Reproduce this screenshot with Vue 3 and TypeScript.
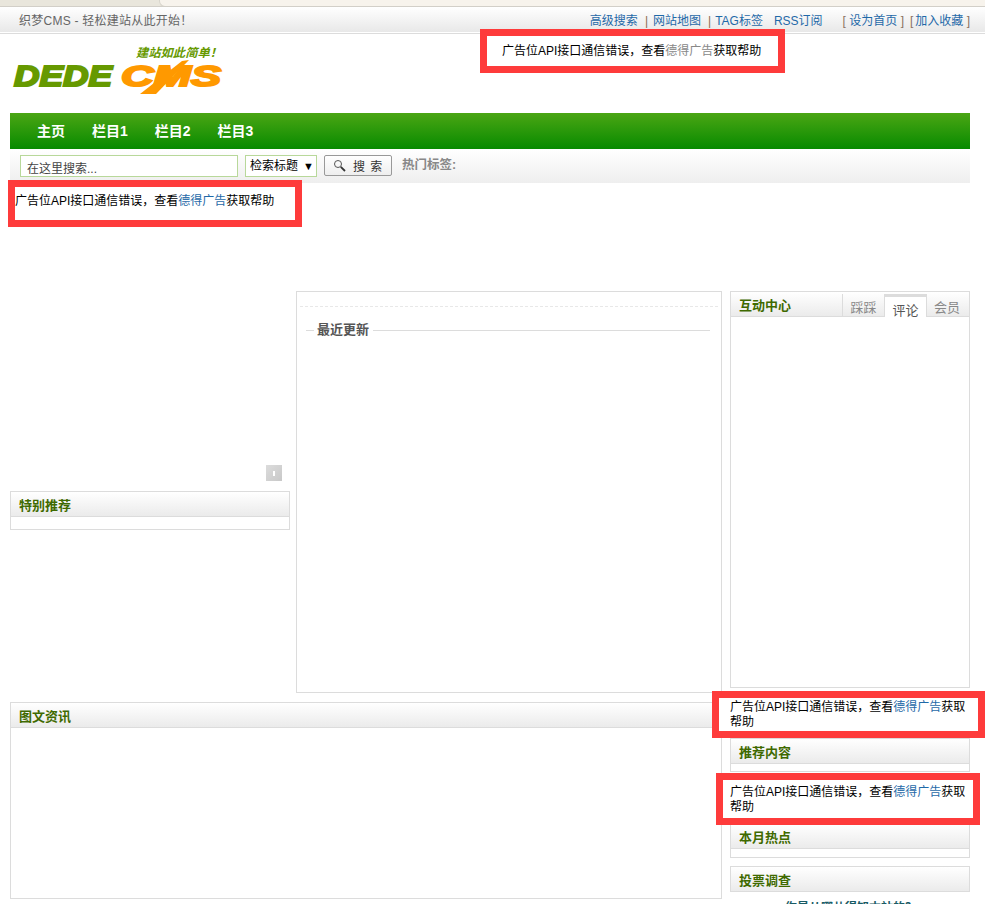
<script setup lang="ts">
const adText = { before: '广告位API接口通信错误，查看', link: '德得广告', after: '获取帮助' }
</script>

<template>
  <div class="page">
    <div class="chrome"><div class="chrome-tab"></div></div>
    <div class="topbar">
      <span class="welcome">织梦CMS - 轻松建站从此开始！</span>
      <nav class="toplinks">
        <a>高级搜索</a><i class="sep">|</i><a>网站地图</a><i class="sep sep-b">|</i><a>TAG标签</a>
        <a class="rss">RSS订阅</a>
        <span class="bracket first">[ <a>设为首页</a> ]</span>
        <span class="bracket">[<a class="inner">加入收藏</a> ]</span>
      </nav>
    </div>

    <div class="wrap">
      <header class="header">
        <svg class="logo" width="220" height="64" viewBox="0 0 220 64">
          <text x="126" y="16" class="slogan" textLength="86" lengthAdjust="spacingAndGlyphs">建站如此简单！</text>
          <text x="4" y="45" class="logo-dede" textLength="98" lengthAdjust="spacingAndGlyphs">DEDE</text>
          <text x="111" y="45" class="logo-cms" textLength="100" lengthAdjust="spacingAndGlyphs">CMS</text>
          <polygon points="130,53 172,20 179,19 146,53" fill="#ff9900" />
        </svg>
        <div class="ad ad-top">
          {{ adText.before }}<a class="muted">{{ adText.link }}</a>{{ adText.after }}
        </div>
      </header>

      <nav class="mainnav">
        <a>主页</a><a>栏目1</a><a>栏目2</a><a>栏目3</a>
      </nav>

      <div class="searchbar">
        <input class="search-input" type="text" value="在这里搜索..." />
        <div class="search-select">检索标题<span class="arrow">▼</span></div>
        <button class="search-btn" type="button">
          <svg width="13" height="13" viewBox="0 0 13 13" fill="none">
            <circle cx="5" cy="5" r="3.5" stroke="#555" stroke-width="1" />
            <path d="M7.8 7.8 L12 12" stroke="#333" stroke-width="1.8" />
          </svg>
          <span>搜 索</span>
        </button>
        <b class="hot">热门标签:</b>
      </div>

      <div class="ad ad-banner">
        {{ adText.before }}<a>{{ adText.link }}</a>{{ adText.after }}
      </div>

      <main class="columns">
        <div class="main-area">
          <div class="top-row">
            <div class="left-col">
              <div class="slider">
                <span class="slide-dot"><i></i></span>
              </div>
              <section class="panel panel-special">
                <h3 class="panel-head">特别推荐</h3>
              </section>
            </div>
            <section class="center">
              <div class="dashed"></div>
              <div class="recent"><b>最近更新</b></div>
            </section>
          </div>
          <section class="panel panel-image">
            <h3 class="panel-head">图文资讯</h3>
          </section>
        </div>

        <aside class="side">
          <section class="panel panel-interact">
            <div class="panel-head tab-head">
              <h3>互动中心</h3>
              <div class="tabs">
                <span>踩踩</span>
                <span class="active">评论</span>
                <span>会员</span>
              </div>
            </div>
          </section>
          <div class="ad ad-side-a">
            {{ adText.before }}<a>{{ adText.link }}</a>{{ adText.after }}
          </div>
          <section class="panel panel-rec">
            <h3 class="panel-head">推荐内容</h3>
          </section>
          <div class="ad ad-side-b">
            {{ adText.before }}<a>{{ adText.link }}</a>{{ adText.after }}
          </div>
          <section class="panel panel-hot">
            <h3 class="panel-head">本月热点</h3>
          </section>
          <section class="panel panel-vote">
            <h3 class="panel-head">投票调查</h3>
          </section>
          <p class="vote-q">你是从哪儿得知本站的？</p>
        </aside>
      </main>
    </div>
  </div>
</template>

<style>
html, body { margin: 0; overflow: hidden; background: #fff; }
</style>

<style scoped>
.page {
  height: 904px;
  overflow: hidden;
  font: 12px/15px "Liberation Sans", "Noto Sans CJK SC", sans-serif;
  color: #000;
  background: #fff;
}
a { color: #1f69a8; text-decoration: none; }
h3 { margin: 0; }

.chrome {
  height: 6px;
  background: #e9e6dc;
  border-bottom: 1px solid #d2cfc8;
  overflow: hidden;
}
.chrome-tab {
  margin-left: 159px;
  height: 12px;
  background: #f7f3ec;
  border-bottom-left-radius: 6px;
  border: 1px solid #d8d5cc;
  border-top: 0;
  border-right: 0;
  margin-top: -6px;
}

.topbar {
  height: 25px;
  box-sizing: border-box;
  display: flex;
  justify-content: space-between;
  align-items: center;
  padding: 4px 15px 0 19px;
  background: linear-gradient(#ffffff, #e8e8e8);
  box-shadow: 0 1px 0 #fff, 0 2px 0 #dcdcdc;
}
.welcome { color: #666; letter-spacing: .25px; font-size: 12px; }
.toplinks { display: flex; align-items: center; white-space: nowrap; }
.sep { font-style: normal; color: #8a6d4e; margin: 0 5px 0 7px; }
.sep-b { margin: 0 4px 0 7px; }
.rss { margin-left: 11px; }
.bracket { color: #8a7060; margin-left: 6px; }
.bracket.first { margin-left: 20px; }
.inner { margin-left: 2px; }

.wrap { margin: 0 15px 0 10px; padding-top: 1px; }

.header {
  height: 80px;
  display: flex;
  align-items: flex-start;
  position: relative;
}
.logo { margin-top: 8px; flex: none; overflow: visible; }
.slogan { font: italic 700 12px "Noto Sans CJK SC", sans-serif; fill: #669900; }
.logo-dede, .logo-cms {
  font: italic 700 29px "Liberation Sans", sans-serif;
  stroke-width: 2;
}
.logo-dede { fill: #669900; stroke: #669900; }
.logo-cms { fill: #ff9900; stroke: #ff9900; }

.ad { position: relative; outline: 7px solid #fe3b3b; background: #fff; }
.ad-top {
  margin: 3px 0 0 257px;
  width: 291px;
  height: 30px;
  box-sizing: border-box;
  padding: 8px 0 0 15px;
  white-space: nowrap;
}
.muted { color: #888; }

.mainnav {
  height: 36px;
  box-sizing: border-box;
  display: flex;
  align-items: center;
  padding: 1px 0 0 27px;
  gap: 27px;
  background: linear-gradient(#4ba614, #078a00);
}
.mainnav a { color: #fff; font-size: 14px; font-weight: 700; }

.searchbar {
  height: 34px;
  display: flex;
  align-items: flex-start;
  padding: 6px 0 0 10px;
  box-sizing: border-box;
  background: linear-gradient(#ffffff, #eeeeee);
}
.search-input {
  width: 218px;
  height: 22px;
  box-sizing: border-box;
  border: 1px solid #b8d89a;
  padding: 3px 6px 0;
  margin: 0;
  font: 12px "Liberation Sans", "Noto Sans CJK SC", sans-serif;
  color: #444;
  outline: none;
  background: #fff;
}
.search-select {
  margin-left: 7px;
  width: 72px;
  height: 22px;
  box-sizing: border-box;
  border: 1px solid #b8d89a;
  background: #fff;
  padding-left: 4px;
  display: flex;
  align-items: center;
  gap: 5px;
  font-size: 12px;
  white-space: nowrap;
}
.arrow { font-size: 11px; }
.search-btn {
  margin-left: 7px;
  width: 68px;
  height: 21px;
  box-sizing: border-box;
  border: 1px solid #999;
  border-radius: 2px;
  background: linear-gradient(#fff, #eee);
  padding: 0 0 0 8px;
  display: flex;
  align-items: center;
  gap: 7px;
  font: 12px "Liberation Sans", "Noto Sans CJK SC", sans-serif;
  color: #333;
}
.search-btn span { word-spacing: 2px; white-space: nowrap; }
.hot { margin-left: 10px; color: #888; font-size: 12.5px; line-height: 20px; white-space: nowrap; }

.ad-banner {
  margin: 4px 0 71px 5px;
  width: 280px;
  height: 33px;
  padding: 7px 0 0;
  box-sizing: border-box;
  white-space: nowrap;
}

.columns { display: flex; gap: 8px; align-items: flex-start; }
.main-area { width: 712px; flex: none; }
.top-row { display: flex; gap: 6px; align-items: flex-start; }
.left-col { width: 280px; flex: none; }
.slider {
  height: 200px;
  display: flex;
  align-items: flex-end;
  justify-content: flex-end;
  padding: 0 8px 10px 0;
  box-sizing: border-box;
}
.slide-dot {
  width: 16px;
  height: 16px;
  background: linear-gradient(135deg, #dcdcdc, #c8c8c8);
  display: flex;
  align-items: center;
  justify-content: center;
}
.slide-dot i { width: 2px; height: 5px; background: #fff; }

.panel { border: 1px solid #dcdcdc; box-sizing: border-box; background: #fff; }
.panel-head {
  height: 24px;
  box-sizing: content-box;
  border-bottom: 1px solid #dcdcdc;
  background: linear-gradient(#ffffff, #ebebeb);
  color: #3f6a00;
  font-size: 13px;
  font-weight: 700;
  line-height: 27px;
  padding-left: 8px;
}
.panel-special { height: 39px; }
.panel-image { margin-top: 9px; height: 197px; }

.center {
  flex: 1;
  height: 402px;
  box-sizing: border-box;
  border: 1px solid #dcdcdc;
  padding: 14px 3px 0;
}
.dashed { border-top: 1px dashed #e8e8e8; }
.recent {
  margin: 23px 8px 0 6px;
  height: 1px;
  background: #dcdcdc;
  display: flex;
  align-items: center;
}
.recent b {
  margin: -2px 0 0 8px;
  padding: 0 4px 0 3px;
  background: #fff;
  color: #555;
  font-size: 13px;
  white-space: nowrap;
}

.side { width: 240px; flex: none; }
.panel-interact { height: 397px; }
.tab-head { display: flex; justify-content: space-between; padding: 0 0 0 8px; position: relative; }
.tab-head h3 { font-size: 13px; line-height: 27px; color: #3f6a00; }
.tabs {
  display: flex;
  align-items: flex-end;
  border-left: 1px solid #dcdcdc;
  margin-top: 2px;
  color: #888;
}
.tabs span {
  width: 41px;
  height: 22px;
  text-align: center;
  line-height: 28px;
  font-size: 13px;
  font-weight: 400;
  box-sizing: border-box;
  overflow: hidden;
}
.tabs span:last-child { width: 42px; padding-right: 2px; }
.tabs .active {
  width: 43px;
  height: 23px;
  margin-bottom: -1px;
  background: #fff;
  color: #555;
  border: 1px solid #dcdcdc;
  border-top: 3px solid #dcdcdc;
  border-bottom: 0;
  line-height: 27px;
}

.ad-side-a {
  margin: 10px -8px 7px -11px;
  height: 33px;
  padding: 2px 8px 0 11px;
  box-sizing: border-box;
}
.ad-side-b {
  margin: 8px -3px 5px -7px;
  height: 38px;
  padding: 5px 3px 0 7px;
  box-sizing: border-box;
}
.panel-rec { height: 34px; }
.panel-hot { height: 35px; }
.panel-vote { margin-top: 8px; height: 26px; }
.panel-vote .panel-head { border-bottom: 0; }
.vote-q {
  margin: 9px 0 0 55px;
  color: #1a5c66;
  font-weight: 700;
  white-space: nowrap;
}
</style>
